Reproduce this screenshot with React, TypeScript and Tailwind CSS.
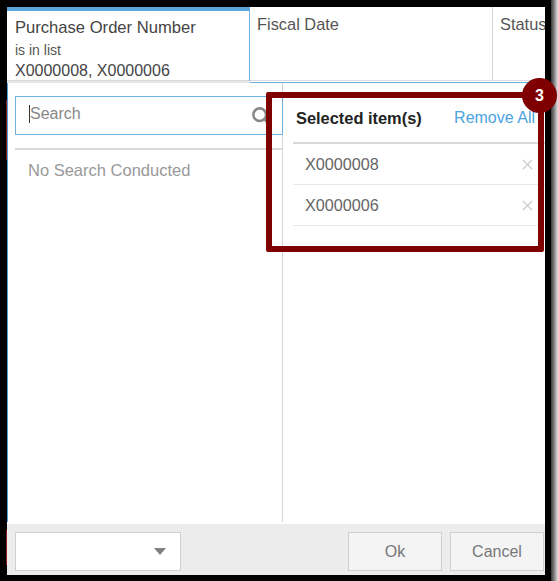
import { Search, X } from "lucide-react";

const font = { fontFamily: '"Liberation Sans", Arial, sans-serif' };

function Row({ label }: { label: string }) {
  return (
    <div className="flex h-[41px] items-center justify-between border-b border-[#e8e8e8] pl-3">
      <span className="text-[16.2px] text-[#666]">{label}</span>
      <X size={17} strokeWidth={2} className="mr-[9px] text-[#d0d0d0]" />
    </div>
  );
}

export default function App() {
  return (
    <div className="relative flex h-[581px] w-[558px] overflow-hidden bg-white" style={font}>
      <div className="h-[581px] w-[551px] shrink-0 bg-black pl-[7px] pr-[6px] pt-[7px]">
        <div className="flex h-[568px] w-[538px] flex-col overflow-hidden bg-white">
          <div className="flex h-[74px] shrink-0 border-b border-[#dcdcdc]">
            <div className="h-[75px] w-[243px] shrink-0 border-r border-t-[4px] border-[#5ba4dc] border-r-[#6db0e0] pl-2 pt-[6px]">
              <div className="whitespace-nowrap text-[16.6px] leading-[22px] text-[#444]">Purchase Order Number</div>
              <div className="mt-[1px] text-[14px] leading-[20px] text-[#555]">is in list</div>
              <div className="whitespace-nowrap text-[16px] leading-[21px] text-[#444]">X0000008, X0000006</div>
            </div>
            <div className="w-[243px] shrink-0 border-r border-[#d5d5d5] pl-[7px] pt-[6px] text-[16.4px] leading-[22px] text-[#555]">Fiscal Date</div>
            <div className="whitespace-nowrap pl-[7px] pt-[6px] text-[16.4px] leading-[22px] text-[#555]">Status</div>
          </div>
          <div className="flex h-[2px] shrink-0">
            <div className="h-[2px] w-[243px] shrink-0 bg-[#e4e4e4]" />
            <div className="mt-[1px] h-[1px] flex-1 bg-[#6db0e0]" />
          </div>
          <div className="flex min-h-0 flex-1">
            <div className="mb-[2px] flex w-[276px] shrink-0 flex-col border-l border-r border-[#d5d5d5] border-l-[#4d9fd8] pt-[13px]">
              <div className="ml-[7px] flex h-[39px] w-[268px] items-center justify-between border border-[#6db0e0] pb-[3px] pl-[13px] pr-[12px]">
                <span className="border-l border-[#333] text-[16px] leading-[18px] text-[#888]">Search</span>
                <Search size={19} strokeWidth={3.2} className="mt-[2px] text-[#888]" />
              </div>
              <div className="ml-[7px] mt-[13px] whitespace-nowrap border-t-2 border-[#d9d9d9] pl-[13px] pt-[9px] text-[16.5px] leading-[22px] text-[#999]">No Search Conducted</div>
            </div>
            <div className="min-w-0 flex-1 pl-[10px]">
              <div className="flex h-[61px] items-center justify-between border-b-2 border-[#d9d9d9] pl-[3px] pr-[10px] pt-[11px]">
                <span className="whitespace-nowrap text-[16.4px] font-bold text-[#222]">Selected item(s)</span>
                <span className="whitespace-nowrap text-[16px] text-[#4ba3df]">Remove All</span>
              </div>
              <Row label="X0000008" />
              <Row label="X0000006" />
            </div>
          </div>
          <div className="flex h-[51px] shrink-0 items-start justify-between bg-[#ececec] pl-2 pr-[1px] pt-2">
            <div className="flex h-[39px] w-[166px] items-center justify-end border border-[#d0d0d0] bg-white pr-[14px]">
              <span className="h-0 w-0 border-x-[6px] border-t-[7px] border-x-transparent border-t-[#808080]" />
            </div>
            <div className="flex gap-2">
              <button className="h-[39px] w-[94px] border border-[#d0d0d0] bg-[#f4f4f4] text-[16px] text-[#777]">Ok</button>
              <button className="h-[39px] w-[94px] border border-[#d0d0d0] bg-[#f4f4f4] text-[16px] text-[#777]">Cancel</button>
            </div>
          </div>
        </div>
      </div>
      <div className="h-[581px] w-[7px] shrink-0 bg-gradient-to-r from-[#3a3a3a] to-[#e4e4e4]" />
      <div className="absolute left-[6px] top-[100px] h-[60px] w-[1px] bg-[#8b1a1a]" />
      <div className="absolute left-[6px] top-[530px] h-[35px] w-[1px] bg-[#8b1a1a]" />
      <div className="absolute left-[266px] top-[92px] h-[160px] w-[278px] rounded-[2px] border-[6px] border-[#7f0000]" />
      <div className="absolute left-[522px] top-[78px] flex h-[35px] w-[35px] items-center justify-center rounded-full bg-[#7f0000] text-[16px] font-bold text-white">3</div>
    </div>
  );
}
